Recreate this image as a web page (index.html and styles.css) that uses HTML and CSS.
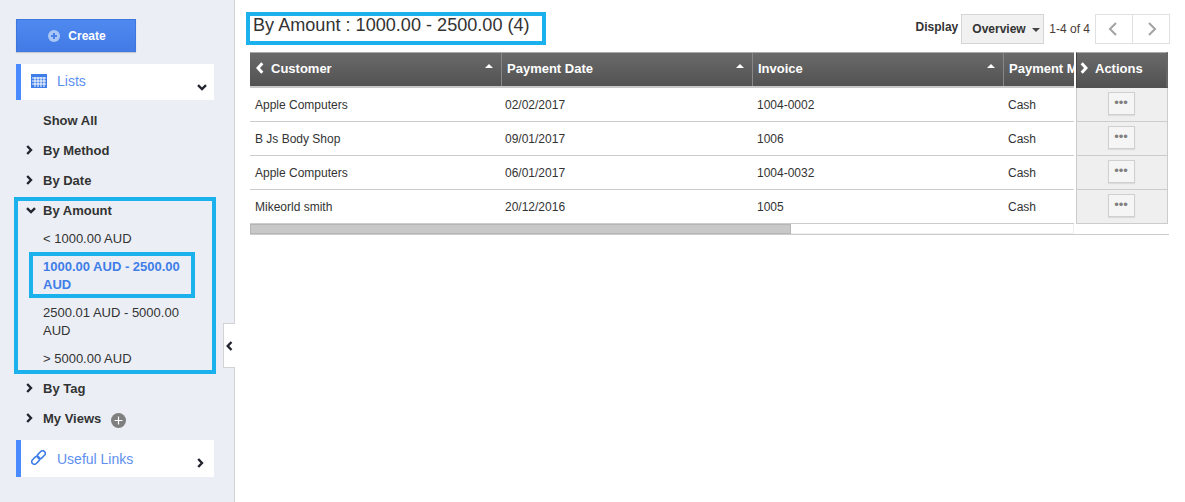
FILE: index.html
```html
<!DOCTYPE html>
<html lang="en">
<head>
<meta charset="utf-8">
<title>Payments</title>
<link rel="stylesheet" href="styles.css">
</head>
<body>
<div class="app">
  <aside class="sidebar">
    <button class="create"><svg class="create-ico" viewBox="0 0 12 12"><circle cx="6" cy="6" r="6" fill="#a9c6f5"/><path d="M6 3v6M3 6h6" stroke="#4a80ea" stroke-width="2"/></svg>Create</button>
    <div class="panel panel-lists">
      <svg class="cal" viewBox="0 0 16 14"><rect width="16" height="14" fill="#3f7de8"/><path d="M1 4h14M1 7h14M1 10h14M4 3v10M7 3v10M10 3v10M13 3v10" stroke="#fff" stroke-width="1"/></svg>
      <span class="panel-label">Lists</span>
      <svg class="chev-down panel-chev" viewBox="0 0 10 7"><path d="M1 1.2l4 3.8 4-3.8" fill="none" stroke="#22252e" stroke-width="2.4"/></svg>
    </div>
    <nav class="tree">
      <div class="node"><span class="tw"></span>Show All</div>
      <div class="node"><svg class="tw chev-right" viewBox="0 0 7 10"><path d="M1.2 1l3.8 4-3.8 4" fill="none" stroke="#22252e" stroke-width="2.4"/></svg>By Method</div>
      <div class="node"><svg class="tw chev-right" viewBox="0 0 7 10"><path d="M1.2 1l3.8 4-3.8 4" fill="none" stroke="#22252e" stroke-width="2.4"/></svg>By Date</div>
      <div class="amount-box">
        <div class="node node-amount"><svg class="tw chev-open" viewBox="0 0 10 7"><path d="M1 1.2l4 3.8 4-3.8" fill="none" stroke="#22252e" stroke-width="2.4"/></svg>By Amount</div>
        <div class="leaf">&lt; 1000.00 AUD</div>
        <div class="leaf leaf-active"><span>1000.00 AUD - 2500.00 AUD</span></div>
        <div class="leaf">2500.01 AUD - 5000.00 AUD</div>
        <div class="leaf leaf-last">&gt; 5000.00 AUD</div>
      </div>
      <div class="node"><svg class="tw chev-right" viewBox="0 0 7 10"><path d="M1.2 1l3.8 4-3.8 4" fill="none" stroke="#22252e" stroke-width="2.4"/></svg>By Tag</div>
      <div class="node"><svg class="tw chev-right" viewBox="0 0 7 10"><path d="M1.2 1l3.8 4-3.8 4" fill="none" stroke="#22252e" stroke-width="2.4"/></svg>My Views<svg class="plus" viewBox="0 0 15 15"><circle cx="7.5" cy="7.5" r="7.5" fill="#7f7f7f"/><path d="M7.5 3.5v8M3.5 7.5h8" stroke="#fff" stroke-width="1.2"/></svg></div>
    </nav>
    <div class="panel panel-links">
      <svg class="link-ico" viewBox="0 0 16 16"><g fill="none" stroke="#3f7de8" stroke-width="1.7" transform="rotate(-45 8 8)"><rect x="-1" y="5.2" width="9.5" height="5.6" rx="2.8"/><rect x="7.5" y="5.2" width="9.5" height="5.6" rx="2.8"/></g></svg>
      <span class="panel-label">Useful Links</span>
      <svg class="chev-right panel-chev-r" viewBox="0 0 7 10"><path d="M1.2 1l3.8 4-3.8 4" fill="none" stroke="#22252e" stroke-width="2.4"/></svg>
    </div>
    <div class="collapse"><svg viewBox="0 0 7 10"><path d="M5.5 1L1.7 5l3.8 4" fill="none" stroke="#22252e" stroke-width="2.4"/></svg></div>
  </aside>
  <main class="content">
    <header class="topbar">
      <h1 class="title">By Amount : 1000.00 - 2500.00 (4)</h1>
      <div class="controls">
        <span class="display-label">Display</span>
        <div class="select">Overview<i class="caret"></i></div>
        <span class="count">1-4 of 4</span>
        <div class="pager">
          <div class="pg"><svg viewBox="0 0 10 16"><path d="M8 2L2 8l6 6" fill="none" stroke="#a3a3a3" stroke-width="2"/></svg></div>
          <div class="pg"><svg viewBox="0 0 10 16"><path d="M2 2l6 6-6 6" fill="none" stroke="#a3a3a3" stroke-width="2"/></svg></div>
        </div>
      </div>
    </header>
    <div class="grid-wrap">
      <div class="grid">
        <div class="head">
          <div class="th th-customer"><svg class="th-chev" viewBox="0 0 8 12"><path d="M6.3 1.2L2 6l4.3 4.8" fill="none" stroke="#fff" stroke-width="3"/></svg>Customer<i class="sort"></i></div>
          <div class="th th-date">Payment Date<i class="sort"></i></div>
          <div class="th th-inv">Invoice<i class="sort"></i></div>
          <div class="th th-method">Payment M</div>
        </div>
        <div class="row"><div class="td c1">Apple Computers</div><div class="td c2">02/02/2017</div><div class="td c3">1004-0002</div><div class="td c4">Cash</div></div>
        <div class="row"><div class="td c1">B Js Body Shop</div><div class="td c2">09/01/2017</div><div class="td c3">1006</div><div class="td c4">Cash</div></div>
        <div class="row"><div class="td c1">Apple Computers</div><div class="td c2">06/01/2017</div><div class="td c3">1004-0032</div><div class="td c4">Cash</div></div>
        <div class="row"><div class="td c1">Mikeorld smith</div><div class="td c2">20/12/2016</div><div class="td c3">1005</div><div class="td c4">Cash</div></div>
        <div class="scroll"><div class="thumb"></div></div>
      </div>
      <div class="actions">
        <div class="act-head"><svg class="th-chev" viewBox="0 0 8 12"><path d="M1.7 1.2L6 6l-4.3 4.8" fill="none" stroke="#fff" stroke-width="3"/></svg>Actions</div>
        <div class="act"><button class="dots">•••</button></div>
        <div class="act"><button class="dots">•••</button></div>
        <div class="act"><button class="dots">•••</button></div>
        <div class="act"><button class="dots">•••</button></div>
      </div>
    </div>
    <div class="rule"></div>
  </main>
</div>
</body>
</html>
```
FILE: styles.css
```css
* { box-sizing: border-box; }
html, body { margin: 0; padding: 0; }
body { width: 1185px; height: 502px; overflow: hidden; font-family: "Liberation Sans", Arial, sans-serif; background: #fff; color: #333; }
.app { display: flex; height: 502px; }

.sidebar { position: relative; width: 235px; flex: none; background: #ebeff5; border-right: 1px solid #d3d3d3; padding: 19px 20px 0 16px; }
.create { display: flex; align-items: center; justify-content: center; width: 120px; height: 33px; padding: 0 0 0 2px; background: linear-gradient(#5089ee, #427be6); border: 1px solid #3f75de; color: #fff; font: bold 12px "Liberation Sans", sans-serif; box-shadow: 0 1px 1px rgba(0,0,0,.15); }
.create-ico { width: 12px; height: 12px; margin-right: 8px; }

.panel { position: relative; display: flex; background: #fff; border-left: 5px solid #4a8aff; width: 198px; }
.panel-lists { height: 36px; margin-top: 12px; padding: 9px 0 0 10px; }
.panel-links { height: 37px; margin-top: 7px; padding: 11px 0 0 10px; }
.panel-label { font-size: 14px; line-height: 16px; color: #5d8fef; margin-left: 10px; }
.cal { width: 16px; height: 14px; margin-top: 1px; }
.link-ico { width: 15px; height: 15px; margin-top: -1px; }
.panel-links .panel-label { margin-left: 11px; }
.chev-down { width: 10px; height: 7px; }
.panel-chev { position: absolute; left: 176px; top: 20px; }
.panel-chev-r { position: absolute; left: 176px; top: 18px; width: 7px; height: 10px; }

.tree { margin-top: 5px; }
.node { display: flex; align-items: center; height: 30px; font-size: 13px; font-weight: bold; color: #333; }
.tw { width: 7px; height: 10px; margin: 0 10px 0 10px; flex: none; }
.plus { width: 15px; height: 15px; margin: 5px 0 0 10px; }

.amount-box { width: 202px; height: 177px; margin: 2px 0 -1px -2px; border: 4px solid #1ab1ec; display: flex; flex-direction: column; }
.node-amount { height: 18px; margin-bottom: 6px; flex: none; }
.chev-open { width: 10px; height: 7px; margin: 0 7px 0 8px; }
.leaf { font-size: 13px; line-height: 18px; color: #333; padding: 5px 12px 5px 25px; }
.leaf-active { padding: 0 0 0 11px; margin: -1px 0 1px; }
.leaf-active span { display: block; width: 166px; height: 46px; padding: 2px 4px 0 10px; border: 4px solid #1ab1ec; font-weight: bold; color: #3f7de8; }
.leaf-last { padding-bottom: 2px; }

.collapse { position: absolute; left: 223px; top: 323px; width: 12px; height: 45px; background: #fff; border: 1px solid #d3d3d3; border-right: 0; display: flex; align-items: center; justify-content: center; }
.collapse svg { width: 7px; height: 10px; }

.content { flex: 1; min-width: 0; padding: 12px 15px 0 15px; }
.topbar { display: flex; justify-content: space-between; height: 40px; }
.title { margin: 0 0 0 -4px; width: 300px; height: 33px; border: 4px solid #1ab1ec; font-size: 18.1px; font-weight: normal; line-height: 18px; padding: 0 0 0 3px; color: #333; white-space: nowrap; }
.controls { display: flex; align-items: flex-start; height: 31px; margin-top: 2px; }
.display-label { font-size: 12px; font-weight: bold; margin: 6px 3px 0 0; color: #333; }
.select { display: flex; align-items: center; width: 83px; height: 30px; padding-left: 10px; font-size: 12px; font-weight: bold; background: #f1f1f1; border: 1px solid #d5d5d5; color: #333; }
.caret { margin-left: 6px; margin-top: 1px; border-top: 4px solid #444; border-left: 4px solid transparent; border-right: 4px solid transparent; }
.count { font-size: 12px; margin: 8px 5px 0 5px; color: #4a3a36; }
.pager { display: flex; width: 75px; height: 30px; border: 1px solid #e0e0e0; }
.pg { flex: 1; display: flex; align-items: center; justify-content: center; padding-right: 1px; }
.pg + .pg { border-left: 1px solid #e0e0e0; padding: 0 0 0 2px; }
.pg svg { width: 10px; height: 16px; }

.grid-wrap { position: relative; display: flex; height: 183px; }
.grid { width: 824px; flex: none; overflow: hidden; }
.head { display: flex; height: 36px; background: linear-gradient(#6a6a6a, #525252); border-top: 1px solid #aaa; border-bottom: 2px solid #c9c9c9; color: #fff; font-size: 13px; font-weight: bold; }
.th { position: relative; display: flex; align-items: center; padding-left: 5px; padding-bottom: 3px; height: 33px; border-right: 1px solid #888; white-space: nowrap; }
.th-customer { width: 252px; padding-left: 6px; }
.th-date { width: 251px; padding-left: 5px; }
.th-inv { width: 251px; padding-left: 5px; }
.th-method { width: 70px; padding-left: 5px; border: 0; overflow: hidden; }
.th-chev { width: 8px; height: 12px; margin-right: 7px; }
.sort { position: absolute; right: 8px; top: 11px; border-bottom: 4px solid #fff; border-left: 4px solid transparent; border-right: 4px solid transparent; }
.row { display: flex; height: 34px; border-bottom: 1px solid #ccc; font-size: 12px; color: #333; }
.td { padding-top: 10px; line-height: 14px; padding-left: 5px; white-space: nowrap; }
.c1 { width: 252px; }
.c2 { width: 251px; padding-left: 3px; }
.c3 { width: 251px; padding-left: 4px; }
.c4 { width: 70px; padding-left: 4px; }
.scroll { height: 10px; background: #fff; border-bottom: 1px solid #eee; border-right: 1px solid #eee; }
.thumb { width: 541px; height: 10px; background: #c8c8c8; border: 1px solid #b5b5b5; }

.actions { position: absolute; left: 826px; top: 0; width: 92px; }
.act-head { display: flex; align-items: center; height: 36px; padding: 0 0 3px 3px; background: linear-gradient(#6a6a6a, #525252); border-top: 1px solid #aaa; border-left: 1px solid #444; border-right: 2px solid #666; border-bottom: 2px solid #525252; color: #fff; font-size: 13px; font-weight: bold; }
.act { display: flex; justify-content: center; height: 34px; padding-top: 4px; padding-right: 2px; background: #efefef; border-left: 1px solid #ccc; border-right: 1px solid #ccc; border-bottom: 1px solid #ccc; }
.dots { width: 27px; height: 23px; padding: 0 0 2px; background: #f5f5f5; border: 1px solid #d0d0d0; color: #808080; font: 13px/1 "Liberation Sans", sans-serif; box-shadow: 0 1px 1px rgba(0,0,0,.08); }
.rule { width: 919px; height: 1px; background: #ccc; margin-top: -1px; }
```
